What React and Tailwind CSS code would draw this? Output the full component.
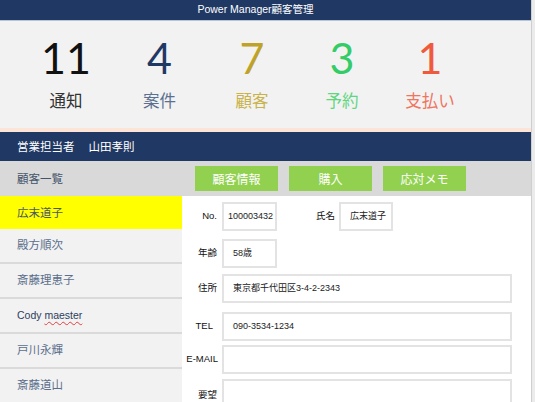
import React from "react";

const cjk = { fontFamily: '"Noto Sans CJK JP", sans-serif' };
const mix = { fontFamily: '"Liberation Sans", "Noto Sans CJK JP", sans-serif' };
const num = { fontFamily: 'Lato, sans-serif' };

const stats = [
  { n: "11", l: "通知", nc: "text-[#111111]", lc: "text-[#333333]", w: "w-[92px]" },
  { n: "4", l: "案件", nc: "text-[#1f3864]", lc: "text-[#5b7090]", w: "w-[95px]" },
  { n: "7", l: "顧客", nc: "text-[#bfa22a]", lc: "text-[#c9b24a]", w: "w-[90px]" },
  { n: "3", l: "予約", nc: "text-[#33cc66]", lc: "text-[#5fd67f]", w: "w-[90px]" },
  { n: "1", l: "支払い", nc: "text-[#f05a3c]", lc: "text-[#f07460]", w: "w-[86px]" },
];

const customers = ["殿方順次", "斎藤理恵子", "Cody maester", "戸川永輝", "斎藤道山"];

function Box({ w, children, pl = "pl-[9px]" }) {
  return (
    <div className={`${w} h-[29px] shrink-0 border-2 border-[#e3e3e3] bg-white flex items-center ${pl} text-[9px] text-[#222] whitespace-nowrap overflow-hidden`} style={mix}>
      {children}
    </div>
  );
}

function Label({ children }) {
  return (
    <div className="w-[40px] shrink-0 flex justify-end pr-[5px] text-[9.5px] text-[#111]" style={mix}>
      {children}
    </div>
  );
}

export default function App() {
  return (
    <div className="w-[535px] h-[402px] overflow-hidden bg-[#ebebeb] flex">
      <div className="w-[532px] h-full border-r border-[#cfcfcf] flex flex-col">
        <div className="h-[21px] shrink-0 bg-[#1f3864] border-b border-[#b8c4d8] flex items-center justify-center pr-[20px]">
          <span className="text-white text-[10.5px]" style={mix}>Power Manager顧客管理</span>
        </div>
        <div className="h-[111px] shrink-0 bg-[#f2f2f2] border-b-[4px] border-[#fce4d6] pl-[20px] pt-[15px] flex">
          {stats.map((s) => (
            <div key={s.l} className={`${s.w} flex flex-col items-center`}>
              <div className={`text-[43px] leading-[43px] ${s.nc}`} style={num}>{s.n}</div>
              <div className={`mt-[13px] text-[16.5px] leading-[17px] ${s.lc}`} style={cjk}>{s.l}</div>
            </div>
          ))}
        </div>
        <div className="h-[29px] shrink-0 bg-[#1f3864] flex items-center pl-[17px] text-white text-[11.5px]" style={cjk}>
          <span>営業担当者</span>
          <span className="ml-[14px]">山田孝則</span>
        </div>
        <div className="h-[35px] shrink-0 bg-[#d9d9d9] flex items-center">
          <div className="w-[195px] pl-[17px] text-[11.5px] text-[#44546a]" style={cjk}>顧客一覧</div>
          <div className="flex gap-[11px] items-center">
            {["顧客情報", "購入", "応対メモ"].map((b) => (
              <div key={b} className="w-[83px] h-[25px] bg-[#92d050] flex items-center justify-center text-white text-[12px]" style={cjk}>
                {b}
              </div>
            ))}
          </div>
        </div>
        <div className="flex flex-1 min-h-0">
          <div className="w-[182px] shrink-0 flex flex-col bg-[#f2f2f2]">
            <div className="h-[33px] shrink-0 bg-[#ffff00] flex items-center pl-[17px] text-[11.5px] text-[#4a5a60]" style={cjk}>広末道子</div>
            {customers.map((c) => (
              <div key={c} className="h-[35px] shrink-0 border-b-2 border-[#dadada] flex items-center pl-[17px] text-[11.5px] text-[#5b6f8c]" style={mix}>
                {c === "Cody maester" ? (
                  <span className="text-[#2c3e60] text-[10.5px]">
                    Cody <span className="underline decoration-wavy decoration-[#e04040] decoration-1 underline-offset-2">maester</span>
                  </span>
                ) : (
                  c
                )}
              </div>
            ))}
          </div>
          <div className="flex-1 bg-white pt-[6px] flex flex-col">
            <div className="flex items-center">
              <Label>No.</Label>
              <Box w="w-[55px]" pl="pl-[4px]">100003432</Box>
              <div className="w-[62px] shrink-0 flex justify-end pr-[4px] text-[9.5px] text-[#111]" style={mix}>氏名</div>
              <Box w="w-[54px]">広末道子</Box>
            </div>
            <div className="flex items-center mt-[8px]">
              <Label>年齢</Label>
              <Box w="w-[55px]">58歳</Box>
            </div>
            <div className="flex items-center mt-[6px]">
              <Label>住所</Label>
              <Box w="w-[290px]">東京都千代田区3-4-2-2343</Box>
            </div>
            <div className="flex items-center mt-[9px]">
              <Label><span className="pr-[4px]">TEL</span></Label>
              <Box w="w-[290px]">090-3534-1234</Box>
            </div>
            <div className="flex items-center mt-[4px]">
              <Label><span className="-mr-[1px]">E-MAIL</span></Label>
              <Box w="w-[290px]"></Box>
            </div>
            <div className="flex items-start mt-[5px]">
              <Label><span className="mt-[9px]">要望</span></Label>
              <Box w="w-[290px]"></Box>
            </div>
          </div>
        </div>
      </div>
    </div>
  );
}
